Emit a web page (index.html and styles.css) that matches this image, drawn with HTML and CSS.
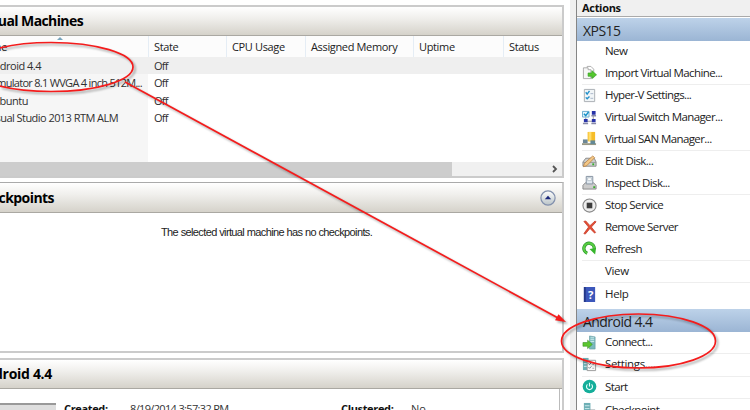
FILE: index.html
```html
<!DOCTYPE html>
<html lang="en">
<head>
<meta charset="utf-8">
<title>Hyper-V Manager</title>
<link rel="stylesheet" href="styles.css">
</head>
<body>
<div class="window">
  <main class="content">
    <section class="panel machines">
      <h2 class="bar"><span class="clip w83">Virtual Machines</span></h2>
      <div class="columns">
        <div><span class="clip w7">Name</span><i class="sort"></i></div><div>State</div><div>CPU Usage</div><div>Assigned Memory</div><div>Uptime</div><div>Status</div>
      </div>
      <div class="list">
        <div class="row selected"><span class="name"><span class="clip w41">Android 4.4</span></span><span class="off">Off</span></div>
        <div class="row"><span class="name"><span class="clip w142">Emulator 8.1 WVGA 4 inch 512M...</span></span><span class="off">Off</span></div>
        <div class="row"><span class="name"><span class="clip w27">Kubuntu</span></span><span class="off">Off</span></div>
        <div class="row"><span class="name"><span class="clip w118">Visual Studio 2013 RTM ALM</span></span><span class="off">Off</span></div>
        <div class="row rest"><span class="name"></span></div>
      </div>
      <div class="scroll"><div class="thumb"></div><svg width="6" height="8" viewBox="0 0 6 8"><path d="M1 1l3 3-3 3" fill="none" stroke="#555" stroke-width="1.8"/></svg></div>
    </section>
    <section class="panel checkpoints">
      <h2 class="bar"><span class="clip w54">Checkpoints</span>
        <svg class="collapse" width="18" height="18" viewBox="0 0 18 18"><defs><linearGradient id="cg" x2="0" y2="1"><stop stop-color="#fff"/><stop offset="1" stop-color="#b9c3c7"/></linearGradient></defs><circle cx="9" cy="9" r="7.1" fill="url(#cg)" stroke="#8290ad" stroke-width="1.2"/><path d="M5.8 10.3h6.4L9 6.8z" fill="#1b277b"/></svg>
      </h2>
      <p class="message">The selected virtual machine has no checkpoints.</p>
    </section>
    <section class="panel details">
      <h2 class="bar"><span class="clip w53">Android 4.4</span></h2>
      <div class="info"><div class="preview"></div><b class="created">Created:</b><span class="date">8/19/2014 3:57:32 PM</span><b class="clustered">Clustered:</b><span>No</span></div>
    </section>
  </main>
  <aside class="actions">
    <div class="title">Actions</div>
    <h3>XPS15</h3>
    <ul>
      <li><i></i><span>New</span></li>
      <li class="line"><svg viewBox="0 0 16 16"><path d="M5.500 1.500h4l3 3v9h-7z" fill="#fff" stroke="#aaa"/><path d="M1.500 4.500V14.500h8v-9.500h-3v-2h-5z" fill="#f7f7f7" stroke="#aaa"/><path d="M6.500 8.500h4V6l5 4.500-5 4v-2.500h-4z" fill="#54c72d" stroke="#319c20" stroke-width=".7"/></svg><span>Import Virtual Machine...</span></li>
      <li><svg viewBox="0 0 16 16"><path d="M2.500 1.500h11v13h-11z" fill="#f1f5f7" stroke="#a7adb1"/><path d="M4 4.500l1.500 2L8 3M4 10l1.500 1.500L8 9" fill="none" stroke="#2390ca" stroke-width="1.500"/><path d="M9 6h3M9 11h3" stroke="#a9b5c9"/></svg><span>Hyper-V Settings...</span></li>
      <li><svg viewBox="0 0 16 16"><path d="M12 5v6M4 8v3M5 12h6" fill="none" stroke="#999"/><path d="M.5 1.500h7v6h-7z" fill="#e7f6fc" stroke="#66aace"/><path d="M2 4l2 2 3-4" fill="none" stroke="#178fc8" stroke-width="1.600"/><path d="M10.500 1h4v4h-4zM2 9.500h4v3.500H2zM10.500 9.500h4V13h-4z" fill="#2833a8"/><path d="M10 6h5M1 14.500h5.500M10 14.500h5" stroke="#888aa7" stroke-width="1.600"/></svg><span>Virtual Switch Manager...</span></li>
      <li class="line"><svg viewBox="0 0 16 16"><path d="M6 1h8v10H6z" fill="#f6bd29"/><path d="M7 1h3v10H7z" fill="#ffdc69"/><path d="M1 9h5v4H1z" fill="#6d8794"/><path d="M0 13h15v2H0z" fill="#9a9985"/><path d="M9 10h5v4H9z" fill="#648996"/></svg><span>Virtual SAN Manager...</span></li>
      <li><svg viewBox="0 0 16 16"><path d="M1 8.500l3-4h9l2 4v4.500H1z" fill="#cfd1d0" stroke="#888"/><path d="M1 9h14" stroke="#999"/><path d="M11 10h2v2h-2z" fill="#35ad2c"/><path d="M1.500 13.500l1-3.500 9-8 2 2-8.500 8.500z" fill="#f3c785" stroke="#b67c3d" stroke-width=".8"/></svg><span>Edit Disk...</span></li>
      <li class="line"><svg viewBox="0 0 16 16"><path d="M1 11l3-3h8l3 3v4H1z" fill="#ccc" stroke="#888"/><path d="M4.500 1.500h7v8h-7z" fill="#e2eaf1" stroke="#83909f"/><path d="M6 3h4v3H6z" fill="#fff" stroke="#a7b3bd" stroke-width=".7"/><path d="M12 12h2v2h-2z" fill="#39ae2c"/></svg><span>Inspect Disk...</span></li>
      <li><svg viewBox="0 0 16 16"><circle cx="8" cy="8" r="7" fill="#eee" stroke="#888" stroke-width="1.200"/><path d="M5 5h6v6H5z" fill="#3d3d3d"/></svg><span>Stop Service</span></li>
      <li><svg viewBox="0 0 16 16"><path d="M2 1.500l5 6L2 14.500l1.500.5 5-6 5 5 1-.8-4.500-5.700L15 2l-1-1-5.500 5L4 1z" fill="#e44e34" stroke="#c53a28" stroke-width=".8"/></svg><span>Remove Server</span></li>
      <li class="line"><svg viewBox="0 0 16 16"><path d="M5.500 13A5.500 5.500 0 1 1 13 8.500" fill="none" stroke="#25902b" stroke-width="3.500"/><path d="M5.500 13A5.500 5.500 0 1 1 13 8.500" fill="none" stroke="#58cc42" stroke-width="2.300"/><path d="M8 8.500l7-1-1 7z" fill="#36b52c"/></svg><span>Refresh</span></li>
      <li class="line"><i></i><span class="plain">View</span></li>
      <li class="help"><svg viewBox="0 0 16 16"><path d="M2 0h12v16H2z" fill="#3c57bb"/><path d="M2 0h2v16H2z" fill="#243888"/><text x="9" y="12.500" text-anchor="middle" class="question">?</text></svg><span class="plain">Help</span></li>
    </ul>
    <h3>Android 4.4</h3>
    <ul class="vm">
      <li class="line"><svg viewBox="0 0 16 16"><path d="M8 1l6 1v13H8z" fill="#7bb9bd" stroke="#5d949b" stroke-width=".6"/><path d="M9 3h4M9 5h4M9 7h4" stroke="#d1edf0"/><path d="M1 8h5V5.500l5 4.500-5 4.500V12H1z" fill="#5bc62e" stroke="#368f21" stroke-width=".6"/></svg><span>Connect...</span></li>
      <li class="line"><svg viewBox="0 0 16 16"><path d="M1 1h6v13H1z" fill="#6eafb5"/><path d="M2 4h4M2 7h4M2 10h4" stroke="#ceebed"/><path d="M5.500 3.500h9v11h-9z" fill="#fafafa" stroke="#999"/><path d="M7 7l1 1 2-2M7 11l1 1 2-2" fill="none" stroke="#57717e"/><path d="M11 8h2M11 12h2" stroke="#aaa"/></svg><span class="plain">Settings....</span></li>
      <li class="line"><svg viewBox="0 0 16 16"><circle cx="8" cy="8" r="7.300" fill="#14ae9a"/><path d="M5.800 5.800a3.200 3.200 0 1 0 4.400 0M8 4v4" fill="none" stroke="#e3fffa" stroke-width="1.200"/></svg><span>Start</span></li>
      <li><svg viewBox="0 0 16 16"><path d="M2 1h7v14H2z" fill="#6eafb5"/><path d="M3 4h5M3 7h5" stroke="#ceebed"/><path d="M8 8h6v6H8z" fill="#909ca0"/></svg><span>Checkpoint</span></li>
    </ul>
  </aside>
  <svg class="annotations" width="750" height="410" viewBox="0 0 750 410">
    <g fill="none" stroke="#f41c1c" stroke-width="1.700"><ellipse cx="51" cy="67" rx="82" ry="24.500"/><ellipse cx="638.500" cy="341" rx="77" ry="27"/><path d="M125 82L559 318.500"/></g><path d="M566 322l-7.500-7.700-3.500 6z" fill="#f41c1c"/>
  </svg>
</div>
</body>
</html>
```
FILE: styles.css
```css
* { box-sizing: border-box; }
body { margin: 0; overflow: hidden; background: #fff; color: #222; font: 12px/16px "Open Sans", "Noto Sans", sans-serif; }
h2, h3, p, ul { margin: 0; padding: 0; }
.window { display: flex; position: relative; width: 750px; height: 410px; overflow: hidden; }
.content { display: flex; flex-direction: column; width: 570px; padding-top: 5px; }
.panel { width: 564px; border: solid #cbcbcb; border-width: 2px 2px 2px 0; flex: none; }
.bar { display: flex; align-items: center; justify-content: space-between; height: 29px; border-bottom: 1px solid #aaa8a2; background: linear-gradient(#fff, #f0efec 40%, #d5d2ca); color: #000; font-size: 14px; font-weight: 700; letter-spacing: -.45px; }
.clip { display: flex; flex: none; justify-content: flex-end; white-space: nowrap; }
.w83 { width: 83px; letter-spacing: -.6px; }
.w54 { width: 54px; letter-spacing: -.55px; }
.w53 { width: 52px; letter-spacing: -.3px; }
.w7 { width: 7px; }
.w41 { width: 41px; letter-spacing: -.5px; }
.w142 { width: 142px; letter-spacing: -.7px; }
.w27 { width: 28px; letter-spacing: -.5px; }
.w118 { width: 118px; letter-spacing: -.55px; }
.machines { height: 173px; }
.columns { display: grid; grid-template-columns: 149px 78px 79px 108px 90px 1fr; height: 21px; background: #fcfcfc; font-size: 11px; line-height: 21px; letter-spacing: -.35px; }
.columns > div { position: relative; border-right: 1px solid #e5edf5; padding-left: 5px; white-space: nowrap; }
.columns > div:first-child { padding: 0; }
.columns > div:last-child { border: 0; }
.sort { position: absolute; left: 57px; top: 1px; border: solid transparent; border-width: 0 3px 3px; border-bottom-color: #78a5bd; }
.list { display: flex; flex-direction: column; height: 105px; color: #303030; font-size: 11px; letter-spacing: -.8px; }
.row { display: flex; flex: none; height: 17.3px; line-height: 18px; }
.name { width: 148px; background: #f6f6f6; }
.off { padding-left: 6px; }
.selected, .selected .name { background: #efefef; }
.rest { flex: 1; height: auto; }
.scroll { display: flex; align-items: center; justify-content: space-between; height: 14px; padding-right: 4px; background: #f0f0f0; }
.thumb { width: 452px; height: 14px; background: #cdcdcd; }
.checkpoints { height: 171px; margin-top: 4px; border-top: 1px solid #aaa; }
.checkpoints .bar { height: 30px; }
.collapse { margin-right: 5px; }
.message { padding: 11px 0 0 161px; font: 11px/16px "Liberation Sans", sans-serif; letter-spacing: -.62px; word-spacing: .1px; color: #222; }
.details { height: 80px; margin-top: 5px; }
.info { display: flex; height: 60px; margin-right: 2px; border-right: 1px solid #bbb; padding-top: 12px; color: #333; font-size: 11px; line-height: 16px; white-space: nowrap; }
.preview { flex: none; width: 56px; margin-top: 2px; border-top: 2px solid #999; background: #dedede; }
.created { width: 66px; margin-left: 8px; letter-spacing: -.35px; color: #111; }
.date { width: 211px; letter-spacing: -.65px; }
.clustered { width: 70px; letter-spacing: -.35px; color: #111; }
.actions { width: 180px; border-left: 6px solid #f0f0f0; box-shadow: inset 1px 0 #858585; padding-left: 1px; background: #fff; }
.title { height: 17px; padding-left: 5px; border-bottom: 1px solid #aaa; background: #f0f0f0; color: #111; font-size: 11px; font-weight: 700; line-height: 16px; letter-spacing: -.3px; }
.actions h3 { height: 23px; margin-top: 1px; padding-left: 6px; background: linear-gradient(#bdd2e9, #9bb5d4); color: #222; font-size: 14px; font-weight: 400; line-height: 25px; letter-spacing: -.55px; }
.actions ul { display: flex; flex-direction: column; list-style: none; }
.actions li { display: flex; flex: none; align-items: center; height: 22px; margin-left: 5px; padding-bottom: 2px; gap: 8px; white-space: nowrap; font-size: 11.5px; letter-spacing: -.6px; }
.actions li > svg, .actions li > i { flex: none; width: 15px; height: 15px; }
.actions li .plain { letter-spacing: -.35px; }
.line { border-bottom: 1px solid #eee; }
.actions .help { height: 25px; padding-bottom: 3px; }
.question { fill: #fff; font: bold 12px "Open Sans", sans-serif; }
.actions .vm li { height: 22.3px; padding-bottom: 1px; }
.annotations { position: absolute; inset: 0; pointer-events: none; filter: drop-shadow(2px 2px 1px #0005); }
```
